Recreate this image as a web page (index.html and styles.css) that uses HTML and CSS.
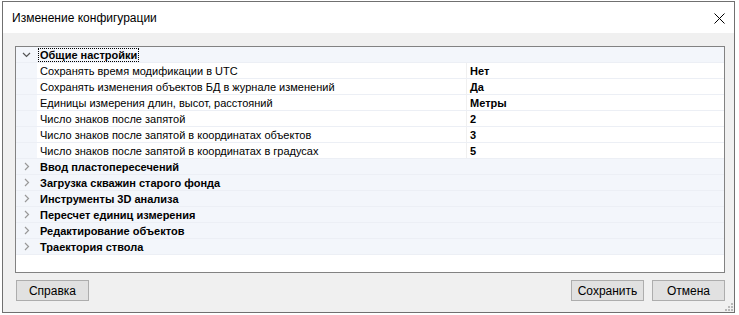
FILE: index.html
```html
<!DOCTYPE html>
<html lang="ru">
<head>
    <meta charset="UTF-8">
    <title>Изменение конфигурации</title>
    <link rel="stylesheet" href="styles.css">
</head>
<body>
    <div class="window">
        <!-- Title bar -->
        <div class="titlebar">
            <span class="title">Изменение конфигурации</span>
            <svg class="close" width="11" height="11" viewBox="0 0 11 11">
                <path d="M0.5 0.5 L10.5 10.5 M10.5 0.5 L0.5 10.5" stroke="#000" stroke-width="1" fill="none"/>
            </svg>
        </div>

        <div class="content">
            <!-- Property grid -->
            <div class="grid">
                <div class="row category">
                    <div class="expander">
                        <svg width="9" height="6" viewBox="0 0 9 6"><path d="M1 1 L4.5 4.5 L8 1" stroke="#555" stroke-width="1.2" fill="none"/></svg>
                    </div>
                    <div class="name"><span class="focus">Общие настройки</span></div>
                </div>
                <div class="row item"><div class="expander"></div><div class="name">Сохранять время модификации в UTC</div><div class="value">Нет</div></div>
                <div class="row item"><div class="expander"></div><div class="name">Сохранять изменения объектов БД в журнале изменений</div><div class="value">Да</div></div>
                <div class="row item"><div class="expander"></div><div class="name">Единицы измерения длин, высот, расстояний</div><div class="value">Метры</div></div>
                <div class="row item"><div class="expander"></div><div class="name">Число знаков после запятой</div><div class="value">2</div></div>
                <div class="row item"><div class="expander"></div><div class="name">Число знаков после запятой в координатах объектов</div><div class="value">3</div></div>
                <div class="row item"><div class="expander"></div><div class="name">Число знаков после запятой в координатах в градусах</div><div class="value">5</div></div>
                <div class="row category collapsed"><div class="expander"><svg width="6" height="9" viewBox="0 0 6 9"><path d="M1 1 L4.5 4.5 L1 8" stroke="#999" stroke-width="1.2" fill="none"/></svg></div><div class="name">Ввод пластопересечений</div></div>
                <div class="row category collapsed"><div class="expander"><svg width="6" height="9" viewBox="0 0 6 9"><path d="M1 1 L4.5 4.5 L1 8" stroke="#999" stroke-width="1.2" fill="none"/></svg></div><div class="name">Загрузка скважин старого фонда</div></div>
                <div class="row category collapsed"><div class="expander"><svg width="6" height="9" viewBox="0 0 6 9"><path d="M1 1 L4.5 4.5 L1 8" stroke="#999" stroke-width="1.2" fill="none"/></svg></div><div class="name">Инструменты 3D анализа</div></div>
                <div class="row category collapsed"><div class="expander"><svg width="6" height="9" viewBox="0 0 6 9"><path d="M1 1 L4.5 4.5 L1 8" stroke="#999" stroke-width="1.2" fill="none"/></svg></div><div class="name">Пересчет единиц измерения</div></div>
                <div class="row category collapsed"><div class="expander"><svg width="6" height="9" viewBox="0 0 6 9"><path d="M1 1 L4.5 4.5 L1 8" stroke="#999" stroke-width="1.2" fill="none"/></svg></div><div class="name">Редактирование объектов</div></div>
                <div class="row category collapsed"><div class="expander"><svg width="6" height="9" viewBox="0 0 6 9"><path d="M1 1 L4.5 4.5 L1 8" stroke="#999" stroke-width="1.2" fill="none"/></svg></div><div class="name">Траектория ствола</div></div>
            </div>

            <!-- Buttons -->
            <div class="buttons">
                <button class="btn">Справка</button>
                <div class="spacer"></div>
                <button class="btn">Сохранить</button>
                <button class="btn">Отмена</button>
            </div>
        </div>
        <div class="grip">
            <svg width="8" height="8" viewBox="0 0 8 8">
                <rect x="6" y="0" width="2" height="2" fill="#b8b8b8"/>
                <rect x="3" y="3" width="2" height="2" fill="#b8b8b8"/>
                <rect x="6" y="3" width="2" height="2" fill="#b8b8b8"/>
                <rect x="0" y="6" width="2" height="2" fill="#b8b8b8"/>
                <rect x="3" y="6" width="2" height="2" fill="#b8b8b8"/>
                <rect x="6" y="6" width="2" height="2" fill="#b8b8b8"/>
            </svg>
        </div>
    </div>
</body>
</html>
```

FILE: styles.css
```css
body {
    margin: 0;
    padding: 1px 0 0 2px;
    background-color: #ffffff;
    font-family: 'Liberation Sans', Arial, sans-serif;
    color: #000000;
}

.window {
    position: relative;
    width: 733px;
    height: 312px;
    box-sizing: border-box;
    border: 1px solid #707070;
    background-color: #f0f0f0;
    display: flex;
    flex-direction: column;
}

/* Title bar */
.titlebar {
    height: 30px;
    background-color: #ffffff;
    display: flex;
    align-items: center;
    padding: 1px 9px 0 9px;
    box-sizing: border-box;
    height: 31px;
    font-size: 12px;
}
.titlebar .title {
    flex: 1;
}
.close {
    margin-top: 1px;
}

.content {
    padding: 13px 9px 0 12px;
}

/* Property grid */
.grid {
    height: 227px;
    box-sizing: border-box;
    border: 1px solid #828282;
    background-color: #ffffff;
    font-size: 11px;
}
.row {
    display: flex;
    height: 16px;
    box-sizing: border-box;
    border-bottom: 1px solid #eceff5;
    line-height: 15px;
}
.row .name,
.row .value {
    padding-top: 1px;
}
.row.category {
    background-color: #f3f6fb;
    font-weight: bold;
}
.expander {
    width: 21px;
    display: flex;
    align-items: center;
    justify-content: center;
    background-color: #f3f6fb;
}
.name {
    flex: 1;
    padding-left: 3px;
    white-space: nowrap;
}
.focus {
    outline: 1px dotted #000000;
    outline-offset: 0;
    margin-left: -1px;
    padding: 0 1px;
}
.value {
    width: 254px;
    border-left: 1px solid #f0f0f0;
    padding-left: 3px;
    font-weight: bold;
}

/* Buttons */
.buttons {
    display: flex;
    gap: 8px;
    margin-top: 7px;
    padding-left: 1px;
}
.spacer {
    flex: 1;
}
.btn {
    width: 73px;
    height: 21px;
    box-sizing: border-box;
    background-color: #e1e1e1;
    border: 1px solid #adadad;
    font-family: 'Liberation Sans', Arial, sans-serif;
    font-size: 12px;
    color: #000000;
    padding: 0;
}

.grip {
    position: absolute;
    right: 1px;
    bottom: 1px;
    line-height: 0;
}
```
